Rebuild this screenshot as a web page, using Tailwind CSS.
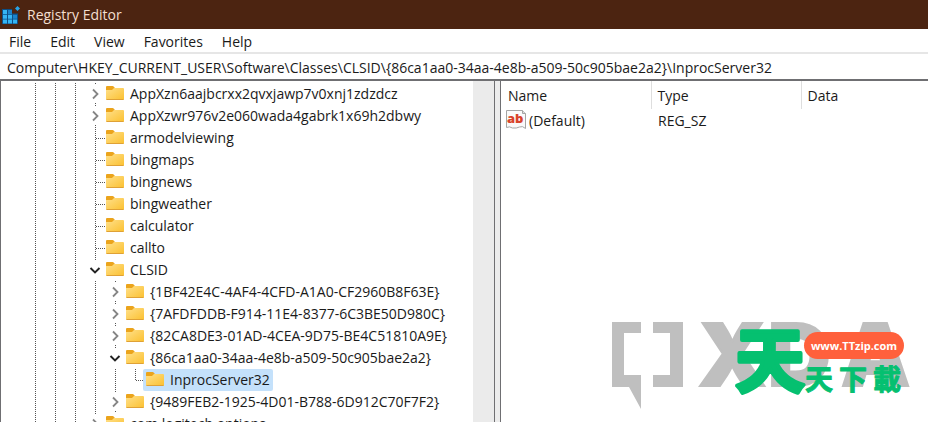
<!DOCTYPE html>
<html lang="en">
<head>
    <meta charset="UTF-8">
    <meta name="viewport" content="width=device-width, initial-scale=1.0">
    <title>Registry Editor</title>
    <script src="https://cdn.jsdelivr.net/npm/@tailwindcss/browser@4"></script>
</head>
<body class="relative h-screen flex flex-col overflow-hidden bg-white font-['Open_Sans',sans-serif] text-[14px] text-[#1a1a1a]">
    <!-- Shared icons -->
    <svg class="absolute size-0">
        <defs>
            <linearGradient id="folderFill" x1="0" y1="0" x2="1" y2="1">
                <stop offset="0" stop-color="#ffe08a"/>
                <stop offset="1" stop-color="#fbc02f"/>
            </linearGradient>
        </defs>
        <symbol id="folder" viewBox="0 0 18 22">
            <path d="M0 8V4q0-1 1-1h5.500q1 0 1.500 1l1 1h-1v3z" fill="#eba41c"/>
            <path d="M0 7h6l2-2h9q1 0 1 1v10q0 1-1 1H1q-1 0-1-1z" fill="url(#folderFill)"/>
            <path d="M0.500 16.500h17" stroke="#dfa136"/>
        </symbol>
        <symbol id="line" viewBox="0 0 20 22">
            <path d="M10.500 0v22" stroke="#555" stroke-dasharray="1 1" shape-rendering="crispEdges"/>
        </symbol>
        <symbol id="branch" viewBox="0 0 20 22">
            <path d="M10.500 0v22M11 11.500h9" fill="none" stroke="#555" stroke-dasharray="1 1" shape-rendering="crispEdges"/>
        </symbol>
        <symbol id="corner" viewBox="0 0 20 22">
            <path d="M10.500 0v12M11 11.500h9" fill="none" stroke="#555" stroke-dasharray="1 1" shape-rendering="crispEdges"/>
        </symbol>
        <symbol id="closed" viewBox="0 0 20 22">
            <path d="M10 0h1v1h-1zM10 20h1v1h-1z" fill="#555"/>
            <path d="M8 6.500l4.500 4.500L8 15.500" fill="none" stroke="#858585" stroke-width="1.800"/>
        </symbol>
        <symbol id="open" viewBox="0 0 20 22">
            <path d="M10 0h1v1h-1z" fill="#555"/>
            <path d="M5.500 9l4.500 4.500L14.500 9" fill="none" stroke="#222" stroke-width="1.900"/>
        </symbol>
    </svg>

    <!-- Title bar -->
    <header class="h-[29px] shrink-0 flex items-center gap-[7px] px-0.5 bg-[#4c2411] text-[#f3dfcf]">
        <svg class="w-[18px] h-[18px]" viewBox="0 0 18 18">
            <path d="M0 3h10v4.500h6V18H0z" fill="#0d4f86"/>
            <path d="M1 4h4v4H1zM1 8.700h4v4H1zM1 13.400h4v4H1zM6 8.700h4v4H6zM6 13.400h4v4H6zM11 13.400h4v4h-4z" fill="#35b5f3"/>
            <path d="M6 4h4v4H6zM11 8.700h4v4h-4z" fill="#1b83cb"/>
            <path d="M15.500 0l2.500 2.500L15.500 5 13 2.500z" fill="#2aa3e6"/>
        </svg>
        <h1>Registry Editor</h1>
    </header>

    <!-- Menu -->
    <nav class="h-[23px] shrink-0 flex items-center gap-[19px] px-[9px] pt-0.5">
        <button>File</button>
        <button>Edit</button>
        <button>View</button>
        <button>Favorites</button>
        <button>Help</button>
    </nav>

    <!-- Address bar -->
    <input type="text" aria-label="Address" class="h-[27px] shrink-0 w-full border-t-2 border-[#e6e6e6] px-[7px] pt-0.5 outline-none" value="Computer\HKEY_CURRENT_USER\Software\Classes\CLSID\{86ca1aa0-34aa-4e8b-a509-50c905bae2a2}\InprocServer32">

    <main class="flex-1 min-h-0 flex border-t-2 border-[#6f6f72]">
        <!-- Key tree -->
        <div class="w-[495px] shrink-0 flex border-x border-[#6f6f72]">
            <ul id="tree" class="flex-1 min-w-0 overflow-hidden pt-0.5"></ul>
            <div class="w-[21px] bg-[#ebebeb]"></div>
        </div>
        <div class="w-[6px] shrink-0 bg-[#ececec] border-r border-[#6f6f72]"></div>

        <!-- Values -->
        <div class="flex-1 min-w-0">
            <table class="w-full table-fixed text-left">
                <thead>
                    <tr class="h-[28px]">
                        <th class="w-[150px] pl-[7px] font-normal">Name</th>
                        <th class="w-[150px] pl-[6px] font-normal border-l border-[#dedede]">Type</th>
                        <th class="pl-[6px] font-normal border-l border-[#dedede]">Data</th>
                    </tr>
                </thead>
                <tbody>
                    <tr class="h-[22px]">
                        <td class="pl-[5px]">
                            <div class="flex items-center gap-[3px]">
                                <svg class="w-5 h-[22px]" viewBox="0 0 20 22">
                                    <path d="M0.500 1.500h16l3 3v15q-3-3-6-1.500t-7 1q-3-2-6-0.500z" fill="#fafafa" stroke="#a5a5a5"/>
                                    <path d="M16.500 1.500v3h3" fill="#ddd" stroke="#a5a5a5"/>
                                    <text x="1" y="14" class="font-['Open_Sans',sans-serif] text-[13px] font-extrabold" fill="#d9432b">ab</text>
                                </svg>
                                <span>(Default)</span>
                            </div>
                        </td>
                        <td class="pl-[7px]">REG_SZ</td>
                        <td></td>
                    </tr>
                </tbody>
            </table>
        </div>
    </main>

    <!-- Watermark -->
    <svg class="absolute right-[16px] bottom-[12px] w-[300px] h-[90px]" viewBox="0 0 300 90">
        <g fill="#bfbfbf">
            <path d="M0 2h29v11H12v42h17v34L17 67H0z"/>
            <path d="M41 2h30v65H41V55h17V13H41z"/>
            <g class="font-['Inter',sans-serif] text-[87px] font-black" stroke="#bfbfbf" stroke-width="2">
                <text x="86" y="66">X</text>
                <text x="156" y="66">D</text>
                <text x="229" y="66">A</text>
            </g>
        </g>
        <g class="font-['Noto_Sans_CJK_TC',sans-serif] font-bold" fill="#05c070" stroke="#05c070" stroke-linejoin="round">
            <text x="123" y="67" class="text-[70px]" stroke-width="4">天</text>
            <g class="text-[28px]">
                <text x="193" y="70">天</text>
                <text x="227" y="70">下</text>
                <text x="261" y="70">載</text>
            </g>
        </g>
        <rect x="192" y="12" width="100" height="27" rx="13.500" fill="#ff603c"/>
        <text x="242" y="30" text-anchor="middle" class="font-['Open_Sans',sans-serif] text-[11px] font-bold" fill="#fff">www.TTzip.com</text>
    </svg>

    <script>
        // guides: the connector cells left of the folder, outermost first
        const keys = [
            { name: 'AppXzn6aajbcrxx2qvxjawp7v0xnj1zdzdcz', guides: ['closed'] },
            { name: 'AppXzwr976v2e060wada4gabrk1x69h2dbwy', guides: ['closed'] },
            { name: 'armodelviewing', guides: ['branch'] },
            { name: 'bingmaps', guides: ['branch'] },
            { name: 'bingnews', guides: ['branch'] },
            { name: 'bingweather', guides: ['branch'] },
            { name: 'calculator', guides: ['branch'] },
            { name: 'callto', guides: ['branch'] },
            { name: 'CLSID', guides: ['open'] },
            { name: '{1BF42E4C-4AF4-4CFD-A1A0-CF2960B8F63E}', guides: ['line', 'closed'] },
            { name: '{7AFDFDDB-F914-11E4-8377-6C3BE50D980C}', guides: ['line', 'closed'] },
            { name: '{82CA8DE3-01AD-4CEA-9D75-BE4C51810A9E}', guides: ['line', 'closed'] },
            { name: '{86ca1aa0-34aa-4e8b-a509-50c905bae2a2}', guides: ['line', 'open'] },
            { name: 'InprocServer32', guides: ['line', 'line', 'corner'], selected: true },
            { name: '{9489FEB2-1925-4D01-B788-6D912C70F7F2}', guides: ['line', 'closed'] },
            { name: 'com.logitech.options', guides: ['closed'] }
        ];

        document.getElementById('tree').innerHTML = keys.map(key => `
            <li class="h-[22px] flex pl-6">
                ${['line', 'line', 'line', ...key.guides].map(id => `<svg class="w-5 h-[22px] shrink-0"><use href="#${id}"/></svg>`).join('')}
                <button class="h-[22px] -ml-0.5 pl-[3px] pr-[3px] flex items-center gap-[6px] whitespace-nowrap rounded-xs ${key.selected ? 'bg-[#c4e1fb]' : ''}">
                    <svg class="w-[18px] h-[22px] shrink-0"><use href="#folder"/></svg>
                    <span class="pb-0.5">${key.name}</span>
                </button>
            </li>`).join('');
    </script>
</body>
</html>
